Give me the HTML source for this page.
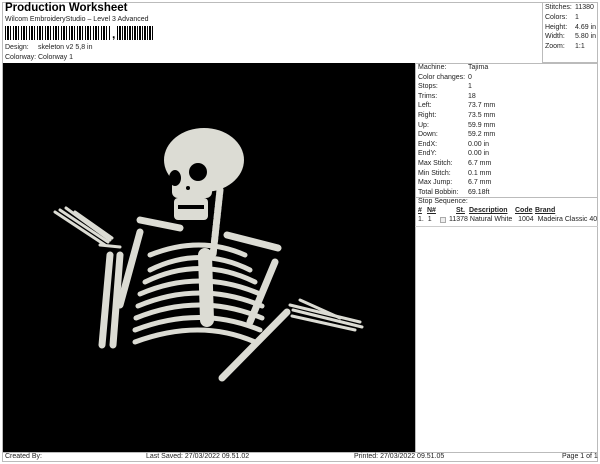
<!DOCTYPE html>
<html><head><style>
*{margin:0;padding:0;box-sizing:border-box}
body{width:600px;height:464px;background:#fff;font-family:"Liberation Sans",sans-serif;font-size:7px;color:#222;position:relative;overflow:hidden}
.a{position:absolute;white-space:nowrap}
.box{position:absolute;border:1px solid #bbb}
</style></head><body>
<div class="box" style="left:2px;top:2px;width:596px;height:460px"></div>
<div class="a" style="left:5px;top:2px;font-size:11.5px;font-weight:bold;color:#000">Production Worksheet</div>
<div class="a" style="left:5px;top:16px">Wilcom EmbroideryStudio – Level 3 Advanced</div>
<div class="a" style="left:5px;top:26px;width:106px;height:14px;background:repeating-linear-gradient(90deg,#000 0 1px,#fff 1px 2px,#000 2px 4px,#fff 4px 5px,#000 5px 6px,#fff 6px 8px)"></div>
<div class="a" style="left:112px;top:27px;font-size:12px;font-weight:bold;color:#000">,</div>
<div class="a" style="left:117px;top:26px;width:36px;height:14px;background:repeating-linear-gradient(90deg,#000 0 1px,#fff 1px 2px,#000 2px 4px,#fff 4px 5px)"></div>
<div class="a" style="left:5px;top:44px">Design:</div><div class="a" style="left:38px;top:44px">skeleton v2 5,8 in</div>
<div class="a" style="left:5px;top:54px">Colorway:</div><div class="a" style="left:38px;top:54px">Colorway 1</div>
<div class="box" style="left:542px;top:2px;width:56px;height:61px;border-top:none;border-right:none"></div>
<div class="a" style="left:545px;top:3px;line-height:9.8px">Stitches:<br>Colors:<br>Height:<br>Width:<br>Zoom:</div>
<div class="a" style="left:575px;top:3px;line-height:9.8px">11380<br>1<br>4.69 in<br>5.80 in<br>1:1</div>
<div class="a" style="left:3px;top:63px;width:412px;height:389px;background:#000"></div>
<svg class="a" style="left:3px;top:63px" width="412" height="389" viewBox="3 63 412 389">
<g stroke="#dcdcd4" stroke-linecap="round" fill="none">
<g stroke-width="5">
<path d="M150 270 Q200 245 250 270"/><path d="M145 282 Q200 255 255 282"/><path d="M140 294 Q200 268 260 294"/>
<path d="M138 306 Q200 280 262 306"/><path d="M136 318 Q200 292 262 318"/><path d="M135 330 Q200 305 260 330"/>
<path d="M135 342 Q200 318 255 342"/><path d="M150 255 Q200 235 245 255"/>
</g>
<g stroke-width="7">
<path d="M140 220 L180 228"/><path d="M227 235 L278 248"/>
<path d="M140 232 L120 305"/><path d="M110 255 L102 345"/><path d="M120 255 L113 345"/>
<path d="M275 262 L250 322"/><path d="M287 312 L222 378"/>
</g>
<path d="M220 190 L213 255" stroke-width="7" stroke-dasharray="4 2"/>
<path d="M205 255 L207 320" stroke-width="14"/>
<g stroke-width="3"><path d="M55 212 L105 245"/><path d="M60 210 L108 242"/><path d="M66 208 L110 240"/><path d="M75 212 L112 238"/><path d="M100 245 L120 247"/>
<path d="M290 305 L360 322"/><path d="M293 310 L362 327"/><path d="M292 316 L355 330"/><path d="M300 300 L340 318"/></g>
</g>
<g fill="#dcdcd4">
<ellipse cx="204" cy="160" rx="40" ry="32"/><rect x="172" y="170" width="40" height="28" rx="6"/>
<rect x="174" y="198" width="34" height="22" rx="4"/>
</g>
<g fill="#000"><circle cx="198" cy="172" r="9"/><ellipse cx="175" cy="178" rx="6" ry="8"/><circle cx="188" cy="188" r="2"/><rect x="178" y="205" width="26" height="4"/></g>
</svg>
<div class="box" style="left:415px;top:63px;width:183px;height:389px;border-right:none;border-bottom:none"></div>
<div class="a" style="left:418px;top:63px;line-height:9.6px">Machine:<br>Color changes:<br>Stops:<br>Trims:<br>Left:<br>Right:<br>Up:<br>Down:<br>EndX:<br>EndY:<br>Max Stitch:<br>Min Stitch:<br>Max Jump:<br>Total Bobbin:</div>
<div class="a" style="left:468px;top:63px;line-height:9.6px">Tajima<br>0<br>1<br>18<br>73.7 mm<br>73.5 mm<br>59.9 mm<br>59.2 mm<br>0.00 in<br>0.00 in<br>6.7 mm<br>0.1 mm<br>6.7 mm<br>69.18ft</div>
<div class="a" style="left:415px;top:197px;width:183px;border-top:1px solid #bbb"></div>
<div class="a" style="left:418px;top:198px">Stop Sequence:</div>
<div class="a" style="left:418px;top:207px;font-weight:bold;text-decoration:underline">#</div>
<div class="a" style="left:427px;top:207px;font-weight:bold;text-decoration:underline">N#</div>
<div class="a" style="left:456px;top:207px;font-weight:bold;text-decoration:underline">St.</div>
<div class="a" style="left:469px;top:207px;font-weight:bold;text-decoration:underline">Description</div>
<div class="a" style="left:515px;top:207px;font-weight:bold;text-decoration:underline">Code</div>
<div class="a" style="left:535px;top:207px;font-weight:bold;text-decoration:underline">Brand</div>
<div class="a" style="left:418px;top:216px">1.&nbsp; 1</div>
<div class="a" style="left:440px;top:217px;width:6px;height:6px;border:1px solid #aaa;background:#eee"></div>
<div class="a" style="left:449px;top:216px">11378 Natural White&nbsp;&nbsp; 1004&nbsp; Madeira Classic 40</div>
<div class="a" style="left:415px;top:226px;width:183px;border-top:1px solid #ccc"></div>
<div class="a" style="left:2px;top:452px;width:596px;border-top:1px solid #bbb"></div>
<div class="a" style="left:5px;top:453px">Created By:</div>
<div class="a" style="left:146px;top:453px">Last Saved: 27/03/2022 09.51.02</div>
<div class="a" style="left:354px;top:453px">Printed: 27/03/2022 09.51.05</div>
<div class="a" style="left:562px;top:453px">Page 1 of 1</div>
</body></html>
